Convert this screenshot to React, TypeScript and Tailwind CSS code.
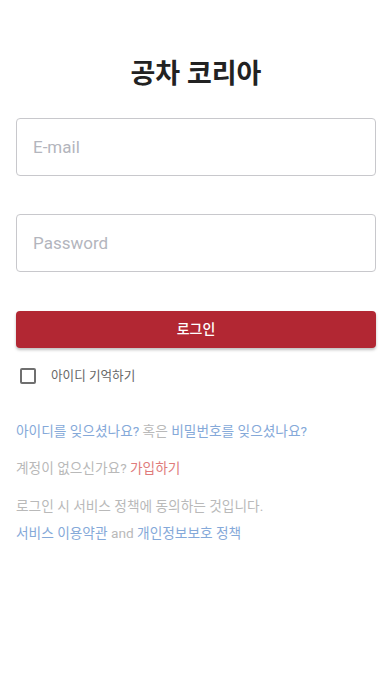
import { useState } from "react";

export default function App() {
  const [remember, setRemember] = useState(false);

  return (
    <div
      className="min-h-[696px] bg-white px-4 pt-[56px]"
      style={{ fontFamily: 'Roboto, "Noto Sans CJK KR", sans-serif' }}
    >
      <h1 className="text-center text-[27px] font-bold leading-[36px] text-[#222]">
        공차 코리아
      </h1>

      {/* Inputs */}
      <input
        type="email"
        placeholder="E-mail"
        className="mt-[26px] block h-[58px] w-full rounded-[4px] border border-[#c8c8cc] px-4 text-[17px] text-[#333] placeholder:text-[#b3b5bd] focus:outline-none"
      />
      <input
        type="password"
        placeholder="Password"
        className="mt-[38px] block h-[58px] w-full rounded-[4px] border border-[#c8c8cc] px-4 text-[17px] text-[#333] placeholder:text-[#b3b5bd] focus:outline-none"
      />

      <button className="mt-[39px] block h-[37px] w-full rounded-[4px] bg-[#b22733] text-[14px] font-medium text-white shadow-[0_2px_3px_rgba(0,0,0,0.25)]">
        로그인
      </button>

      {/* Remember me */}
      <label className="mt-[12px] flex h-[32px] items-center">
        <span className="ml-1 flex h-4 w-4 items-center justify-center rounded-[2px] border-2 border-[#6f6f6f]">
          <input
            type="checkbox"
            checked={remember}
            onChange={(e) => setRemember(e.target.checked)}
            className="hidden"
          />
          {remember && <span className="h-2 w-2 bg-[#6f6f6f]" />}
        </span>
        <span className="ml-[15px] text-[12.6px] text-[#666]">아이디 기억하기</span>
      </label>

      {/* Links */}
      <div className="text-[13.7px] leading-[20px] text-[#b9b9b9]">
        <p className="mt-[29px]">
          <a className="text-[#85a9d9]">아이디를 잊으셨나요?</a> 혹은{" "}
          <a className="text-[#85a9d9]">비밀번호를 잊으셨나요?</a>
        </p>
        <p className="mt-[17px]">
          계정이 없으신가요? <a className="text-[#e07b7b]">가입하기</a>
        </p>
        <p className="mt-[18px]">로그인 시 서비스 정책에 동의하는 것입니다.</p>
        <p className="mt-[7px]">
          <a className="text-[#85a9d9]">서비스 이용약관</a> and{" "}
          <a className="text-[#85a9d9]">개인정보보호 정책</a>
        </p>
      </div>
    </div>
  );
}
